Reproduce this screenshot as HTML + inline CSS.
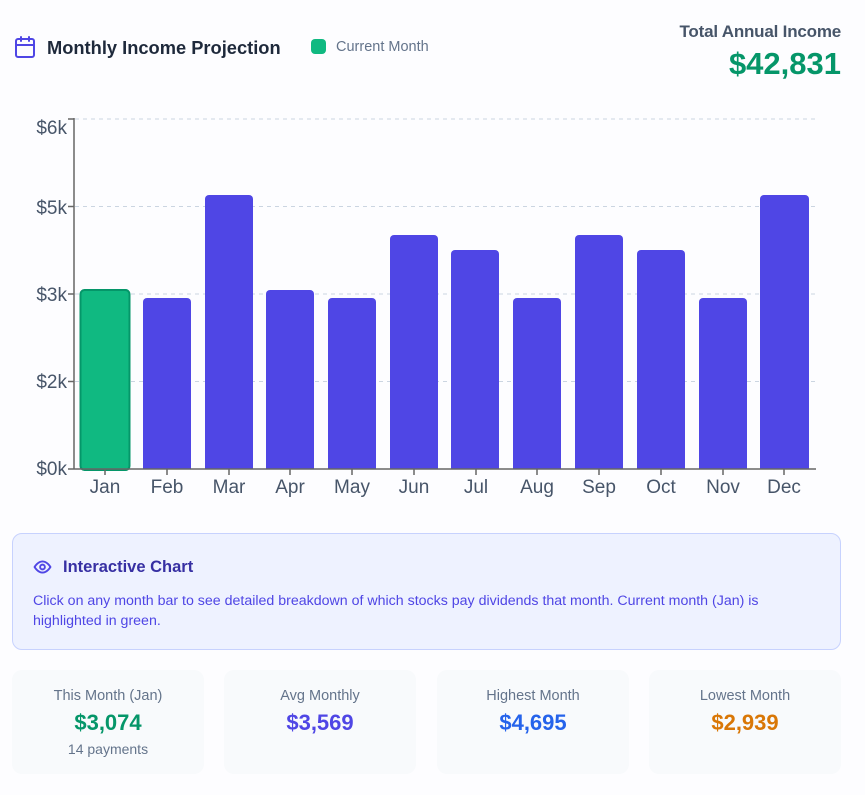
<!DOCTYPE html>
<html><head><meta charset="utf-8"><style>
body{margin:0;background:#fdfdff;font-family:"Liberation Sans",sans-serif;width:865px;height:795px;position:relative;overflow:hidden}
.abs{position:absolute}
.card{position:absolute;top:670px;width:192px;height:104px;background:#f8fafc;border-radius:10px;text-align:center}
.card .l{margin-top:18px;font-size:14.5px;color:#64748b}
.card .v{margin-top:6px;font-size:22px;font-weight:bold}
.card .s{margin-top:5px;font-size:14px;color:#64748b}
</style></head><body>
<svg class="abs" style="left:13px;top:35px" width="24" height="24" viewBox="0 0 24 24" fill="none" stroke="#4f46e5" stroke-width="2" stroke-linecap="round" stroke-linejoin="round"><rect x="3" y="4" width="18" height="18" rx="2"/><path d="M16 2v4M8 2v4M3 10h18"/></svg>
<div class="abs" style="left:47px;top:37px;font-size:18.3px;font-weight:bold;color:#1e293b">Monthly Income Projection</div>
<div class="abs" style="left:311px;top:39px;width:15px;height:15px;border-radius:4px;background:#10b981"></div>
<div class="abs" style="left:336px;top:39px;font-size:14.5px;color:#64748b">Current Month</div>
<div class="abs" style="right:24px;top:22px;font-size:17px;font-weight:bold;color:#475569;text-align:right;letter-spacing:-0.2px">Total Annual Income</div>
<div class="abs" style="right:24px;top:46px;font-size:31px;font-weight:bold;color:#059669;text-align:right">$42,831</div>
<svg class="abs" style="left:0;top:0" width="865" height="510">
<g stroke="#cbd5e1" stroke-dasharray="4 4" stroke-width="1"><line x1="75" y1="119" x2="815" y2="119"/><line x1="75" y1="206.5" x2="815" y2="206.5"/><line x1="75" y1="294" x2="815" y2="294"/><line x1="75" y1="381.5" x2="815" y2="381.5"/></g>
<g font-family="Liberation Sans" font-size="19" fill="#475569" text-anchor="end"><text x="67" y="134">$6k</text><text x="67" y="214">$5k</text><text x="67" y="301">$3k</text><text x="67" y="388">$2k</text><text x="67" y="475">$0k</text></g>
<g fill="#4f46e5">
<rect x="80.5" y="290" width="49" height="180" rx="4" fill="#10b981" stroke="#059669" stroke-width="2"/>
<path d="M143 469V302a4 4 0 0 1 4-4h40a4 4 0 0 1 4 4v167z"/>
<path d="M205 469V199a4 4 0 0 1 4-4h40a4 4 0 0 1 4 4v270z"/>
<path d="M266 469V294a4 4 0 0 1 4-4h40a4 4 0 0 1 4 4v175z"/>
<path d="M328 469V302a4 4 0 0 1 4-4h40a4 4 0 0 1 4 4v167z"/>
<path d="M390 469V239a4 4 0 0 1 4-4h40a4 4 0 0 1 4 4v230z"/>
<path d="M451 469V254a4 4 0 0 1 4-4h40a4 4 0 0 1 4 4v215z"/>
<path d="M513 469V302a4 4 0 0 1 4-4h40a4 4 0 0 1 4 4v167z"/>
<path d="M575 469V239a4 4 0 0 1 4-4h40a4 4 0 0 1 4 4v230z"/>
<path d="M637 469V254a4 4 0 0 1 4-4h40a4 4 0 0 1 4 4v215z"/>
<path d="M699 469V302a4 4 0 0 1 4-4h40a4 4 0 0 1 4 4v167z"/>
<path d="M760 469V199a4 4 0 0 1 4-4h41a4 4 0 0 1 4 4v270z"/>
</g>
<g stroke="#666" stroke-width="1.5"><line x1="74" y1="118" x2="74" y2="469"/><line x1="68" y1="469" x2="816" y2="469"/>
<path d="M68 119h6M68 206.5h6M68 294h6M68 381.5h6M105 469v6M167 469v6M229 469v6M290 469v6M352 469v6M414 469v6M476 469v6M537 469v6M599 469v6M661 469v6M723 469v6M784 469v6"/></g>
<g font-family="Liberation Sans" font-size="19" fill="#475569" text-anchor="middle"><text x="105" y="493">Jan</text><text x="167" y="493">Feb</text><text x="229" y="493">Mar</text><text x="290" y="493">Apr</text><text x="352" y="493">May</text><text x="414" y="493">Jun</text><text x="476" y="493">Jul</text><text x="537" y="493">Aug</text><text x="599" y="493">Sep</text><text x="661" y="493">Oct</text><text x="723" y="493">Nov</text><text x="784" y="493">Dec</text></g>
</svg>
<div class="abs" style="left:12px;top:533px;width:827px;height:115px;background:#eef2ff;border:1px solid #c7d2fe;border-radius:10px"></div>
<svg class="abs" style="left:33px;top:559px" width="19" height="16" viewBox="0 0 24 20" fill="none" stroke="#4f46e5" stroke-width="2.4"><path d="M2 10s4-7 10-7 10 7 10 7-4 7-10 7S2 10 2 10z"/><circle cx="12" cy="10" r="3"/></svg>
<div class="abs" style="left:63px;top:558px;font-size:16.5px;font-weight:bold;color:#3730a3">Interactive Chart</div>
<div class="abs" style="left:33px;top:591px;width:790px;font-size:14.2px;line-height:20px;color:#4f46e5">Click on any month bar to see detailed breakdown of which stocks pay dividends that month. Current month (Jan) is highlighted in green.</div>
<div class="card" style="left:12px"><div class="l">This Month (Jan)</div><div class="v" style="color:#059669">$3,074</div><div class="s">14 payments</div></div>
<div class="card" style="left:224px"><div class="l">Avg Monthly</div><div class="v" style="color:#4f46e5">$3,569</div></div>
<div class="card" style="left:437px"><div class="l">Highest Month</div><div class="v" style="color:#2563eb">$4,695</div></div>
<div class="card" style="left:649px"><div class="l">Lowest Month</div><div class="v" style="color:#d97706">$2,939</div></div>
</body></html>
